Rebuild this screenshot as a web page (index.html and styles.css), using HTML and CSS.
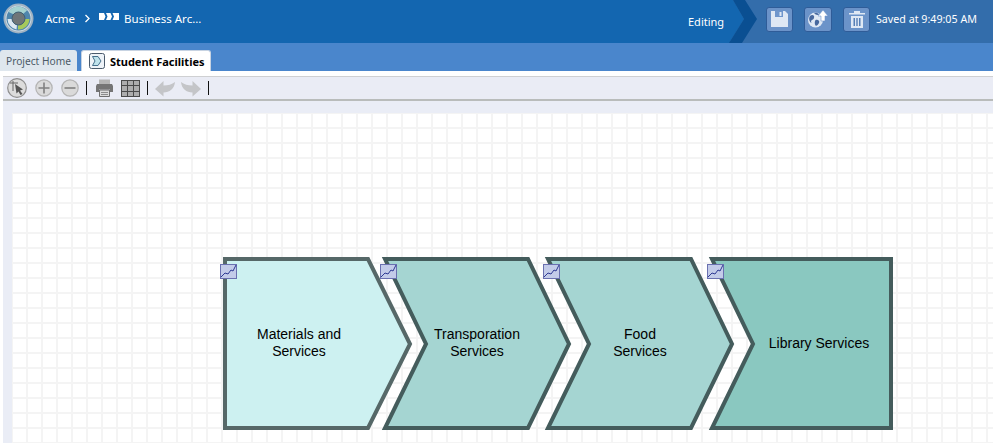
FILE: index.html
```html
<!DOCTYPE html>
<html lang="en">
<head>
<meta charset="utf-8">
<title>Student Facilities</title>
<link rel="stylesheet" href="styles.css">
</head>
<body>
<div class="app">
  <header class="header">
    <div class="crumbs">
      <svg class="logo" width="36" height="36" viewBox="0 0 36 36">
        <circle cx="18.500" cy="18.500" r="14" fill="#cfdbe4" stroke="#9fb2c2" stroke-width="2"/>
        <circle cx="18.500" cy="18.500" r="12" fill="#4f86ad"/>
        <path d="M8.500 12 A11.500 11.500 0 0 1 27 10.500 L23 14 A6 6 0 0 0 14 14.500 Z" fill="#a5d2d0"/>
        <path d="M29.500 19 A11 11 0 0 1 18 29.500 L18 25 A7 7 0 0 0 25 19 Z" fill="#a6c95c"/>
        <path d="M7.500 19 A11 11 0 0 0 16.500 29.500 L17 25 A7 7 0 0 1 12 19 Z" fill="#dbe8f2"/>
        <circle cx="18.500" cy="18.500" r="6.500" fill="#6f7678" stroke="#3f5f73"/>
      </svg>
      <span class="crumb acme">Acme</span>
      <svg class="sep" width="7" height="9" viewBox="0 0 7 9"><path d="M1.500 1 L5 4.500 L1.500 8" fill="none" stroke="#fff" stroke-width="1.300"/></svg>
      <svg class="chain" width="20" height="7" viewBox="0 0 20 7"><path d="M0 0H5L6.500 3.500L5 7H0ZM7 0H11.500L13 3.500L11.500 7H7L8.500 3.500ZM13.500 0H20V7H13.500L15 3.500Z" fill="#fff"/></svg>
      <span class="crumb">Business Arc...</span>
    </div>
    <div class="status">
      <span class="editing">Editing</span>
      <svg class="arrow" width="28" height="43" viewBox="0 0 28 43"><path d="M0 0H4L15 19L0 43Z" fill="#1366b0"/><path d="M4 0H16L28 19L13 43H0L15 19Z" fill="#0a4f92"/></svg>
      <div class="actions">
        <button class="action" type="button" aria-label="Save"><svg width="17" height="16" viewBox="0 0 17 16"><path d="M0 0H14L17 3V16H0Z" fill="#dfe8f4"/><path d="M4 0H12V6H4Z" fill="#6f96cc"/><path d="M8.500 1H10.500V5H8.500Z" fill="#dfe8f4"/></svg></button>
        <button class="action wide" type="button" aria-label="Publish"><svg width="22" height="18" viewBox="0 0 22 18"><circle cx="8.500" cy="10" r="7.500" fill="#dfe8f4"/><path d="M3 6C5 4 8 5 7 8S3 9 4.500 13C2 12 1.500 8 3 6ZM8.500 10C11 9 13 11 12 13S9.500 16.500 8.500 15.500 7.500 11 8.500 10ZM7 3C9 2.500 11 3 12.500 4.500 10.500 5.500 8.500 5 7 3Z" fill="#47689e"/><path d="M16 0L21 6H18V11H14V6H11Z" fill="#fff" stroke="#6f96cc" stroke-width=".6"/></svg></button>
        <button class="action" type="button" aria-label="Delete"><svg width="16" height="18" viewBox="0 0 16 18"><path d="M0 3H16V4.500H0ZM5 1H11V3H5Z" fill="#dfe8f4"/><path d="M2 6H14V18H2Z" fill="#dfe8f4"/><path d="M4.500 8H6V16H4.500ZM7.300 8H8.700V16H7.300ZM10 8H11.500V16H10Z" fill="#567fb6"/></svg></button>
      </div>
      <span class="saved">Saved at 9:49:05 AM</span>
    </div>
  </header>
  <nav class="tabs">
    <div class="tab">Project Home</div>
    <div class="tab active">
      <svg width="16" height="16" viewBox="0 0 16 16"><rect x=".5" y=".5" width="15" height="15" rx="2" fill="#eef3f8" stroke="#4a5a6c"/><path d="M3.500 3.500H9L12 8L9 12.500H3.500L6 8Z" fill="#bfe3ec" stroke="#46708c"/></svg>
      <span>Student Facilities</span>
    </div>
  </nav>
  <div class="toolbar">
    <svg class="tool" width="20" height="20" viewBox="0 0 20 20"><circle cx="10" cy="10" r="9.300" fill="#dcdcdc" stroke="#8e8e8e" stroke-width="1.200"/><path d="M3 5H11M6 3V13" stroke="#666" stroke-width="1" fill="none"/><path d="M8 6L16 11.500L13 12.500L15.500 16L13.500 17L11.500 13.500L9.500 15.500Z" fill="#555"/></svg>
    <svg class="tool" width="18" height="18" viewBox="0 0 18 18"><circle cx="9" cy="9" r="8.200" fill="#dadada" stroke="#b4b4b4" stroke-width="1.200"/><path d="M3.500 9H14.500M9 3.500V14.500" stroke="#808080" stroke-width="1.600"/></svg>
    <svg class="tool" width="18" height="18" viewBox="0 0 18 18"><circle cx="9" cy="9" r="8.200" fill="#dadada" stroke="#b4b4b4" stroke-width="1.200"/><path d="M3.500 9H14.500" stroke="#808080" stroke-width="1.600"/></svg>
    <i class="divider"></i>
    <svg class="tool" width="17" height="18" viewBox="0 0 17 18"><path d="M3 .5H14V5H3Z" fill="#b5b5b5"/><path d="M1 5H16L17 7V13H14V10.500H3V13H0V7Z" fill="#757575"/><path d="M3.500 11H13.500V17.500H3.500Z" fill="#dcdcdc" stroke="#6f6f6f"/><path d="M5 13.500H12M5 15.500H12" stroke="#777" stroke-width=".8"/></svg>
    <svg class="tool" width="19" height="17" viewBox="0 0 19 17"><rect width="19" height="17" fill="#4a4a4a"/><path d="M1 1H6V5H1ZM7 1H12V5H7ZM13 1H18V5H13ZM1 6H6V11H1ZM7 6H12V11H7ZM13 6H18V11H13ZM1 12H6V16H1ZM7 12H12V16H7ZM13 12H18V16H13Z" fill="#adadad"/></svg>
    <i class="divider"></i>
    <svg class="tool undo" width="20" height="17" viewBox="0 0 20 17"><path d="M0 9L8.500 1V5.500C13 5.500 17 4.500 20 2 19.500 8.500 14.500 12.500 8.500 12.500V16.500Z" fill="#c4c5c8"/></svg>
    <svg class="tool undo" width="20" height="17" viewBox="0 0 20 17"><path d="M20 9L11.500 1V5.500C7 5.500 3 4.500 0 2 .5 8.500 5.500 12.500 11.500 12.500V16.500Z" fill="#c4c5c8"/></svg>
    <i class="divider"></i>
  </div>
  <main class="workspace">
    <div class="canvas">
      <svg class="diagram" width="981" height="330" viewBox="12 113 981 330">
        <path class="shape light" d="M225 259H368L410 344L368 428H225Z"/>
        <path class="shape mid" d="M385 259H528L569 344L528 428H385L426 344Z"/>
        <path class="shape mid" d="M548 259H691L732 344L691 428H548L589 344Z"/>
        <path class="shape deep" d="M712 259H891V428H712L753 344Z"/>
        <text class="label" x="299" y="339">Materials and</text>
        <text class="label" x="299" y="356">Services</text>
        <text class="label" x="477" y="339">Transporation</text>
        <text class="label" x="477" y="356">Services</text>
        <text class="label" x="640" y="339">Food</text>
        <text class="label" x="640" y="356">Services</text>
        <text class="label" x="819" y="348">Library Services</text>
        <g class="badge"><rect x="220.500" y="264.500" width="16" height="14"/><path d="M221 277L225 273L228 274L231 270L233 271L236 265"/></g>
        <g class="badge"><rect x="380.500" y="264.500" width="16" height="14"/><path d="M381 277L385 273L388 274L391 270L393 271L396 265"/></g>
        <g class="badge"><rect x="543.500" y="264.500" width="16" height="14"/><path d="M544 277L548 273L551 274L554 270L556 271L559 265"/></g>
        <g class="badge"><rect x="707.500" y="264.500" width="16" height="14"/><path d="M708 277L712 273L715 274L718 270L720 271L723 265"/></g>
      </svg>
    </div>
  </main>
</div>
</body>
</html>
```
FILE: styles.css
```css
* { box-sizing: border-box; }
html, body { margin: 0; height: 100%; overflow: hidden; }
body { font-family: "Noto Sans", "Liberation Sans", sans-serif; background: #fff; }
.app { display: flex; flex-direction: column; width: 993px; height: 443px; }

.header { display: flex; justify-content: space-between; height: 43px; background: #1366b0; color: #fff; font-size: 11.500px; flex: none; }
.crumbs { display: flex; align-items: center; height: 36px; }
.logo { flex: none; margin-right: 9px; }
.crumb.acme { margin-right: 9px; }
.sep { margin-right: 8px; }
.chain { margin-right: 5px; margin-top: -3px; }
.status { display: flex; align-items: center; background: linear-gradient(to right, #1366b0 0, #1366b0 60px, #336dab 60px); width: 323px; padding-left: 18px; }
.editing { width: 41px; font-size: 11px; margin-bottom: 1px; flex: none; }
.arrow { margin-right: 9px; flex: none; align-self: flex-start; }
.actions { display: flex; gap: 11px; margin-bottom: 5px; }
.action { display: flex; align-items: center; justify-content: center; width: 27px; height: 25px; padding: 0; background: #6b93c9; border: 1px solid #2f5c98; border-radius: 3px; }
.action.wide { width: 28px; }
.saved { font-size: 10.700px; margin-left: 6px; margin-bottom: 5px; white-space: nowrap; }

.tabs { display: flex; align-items: flex-end; gap: 4px; height: 28px; background: #4a86cc; flex: none; padding-top: 6px; }
.tab { height: 21px; display: flex; align-items: center; padding: 0 6px; font-size: 10.200px; color: #4b5a68; background: #dfe7ee; border-radius: 3px 3px 0 0; }
.tab.active { gap: 5px; color: #000; background: #fff; font-weight: 700; border: 1px solid #c7d3e2; border-bottom: 0; padding: 0 5px 0 7px; font-size: 11px; }

.toolbar { display: flex; align-items: center; gap: 8px; height: 25px; margin: 5px 0 0 3px; padding-left: 4px; background: #eaecf5; border-top: 1px solid #cfd0d2; border-bottom: 2px solid #b9bcbb; flex: none; }
.divider { width: 1px; height: 14px; background: #111; margin: 0 1px 0 -1px; }
.tool { flex: none; }
.tool.undo { margin-left: -2px; }

.workspace { flex: 1; min-height: 0; background: #eaedf6; margin-left: 3px; padding: 12px 0 0 9px; }
.canvas { width: 100%; height: 100%; background-color: #fff;
  background-image: linear-gradient(to right, #f4f4f4 2px, transparent 2px), linear-gradient(to bottom, #f4f4f4 2px, transparent 2px);
  background-size: 15px 15px; background-position: 14px 14px; }
.diagram { display: block; }
.shape { stroke-width: 4; stroke-linejoin: miter; }
.shape.light { fill: #cdf1f1; stroke: #566868; }
.shape.mid { fill: #a5d5d2; stroke: #445c5c; }
.shape.deep { fill: #8ac8c0; stroke: #445c5c; }
.label { font-family: "Liberation Sans", sans-serif; font-size: 14px; text-anchor: middle; fill: #000; }
.badge rect { fill: #c3cbe9; stroke: #6a70b0; }
.badge path { fill: none; stroke: #2f3a94; stroke-width: 1; }
```
